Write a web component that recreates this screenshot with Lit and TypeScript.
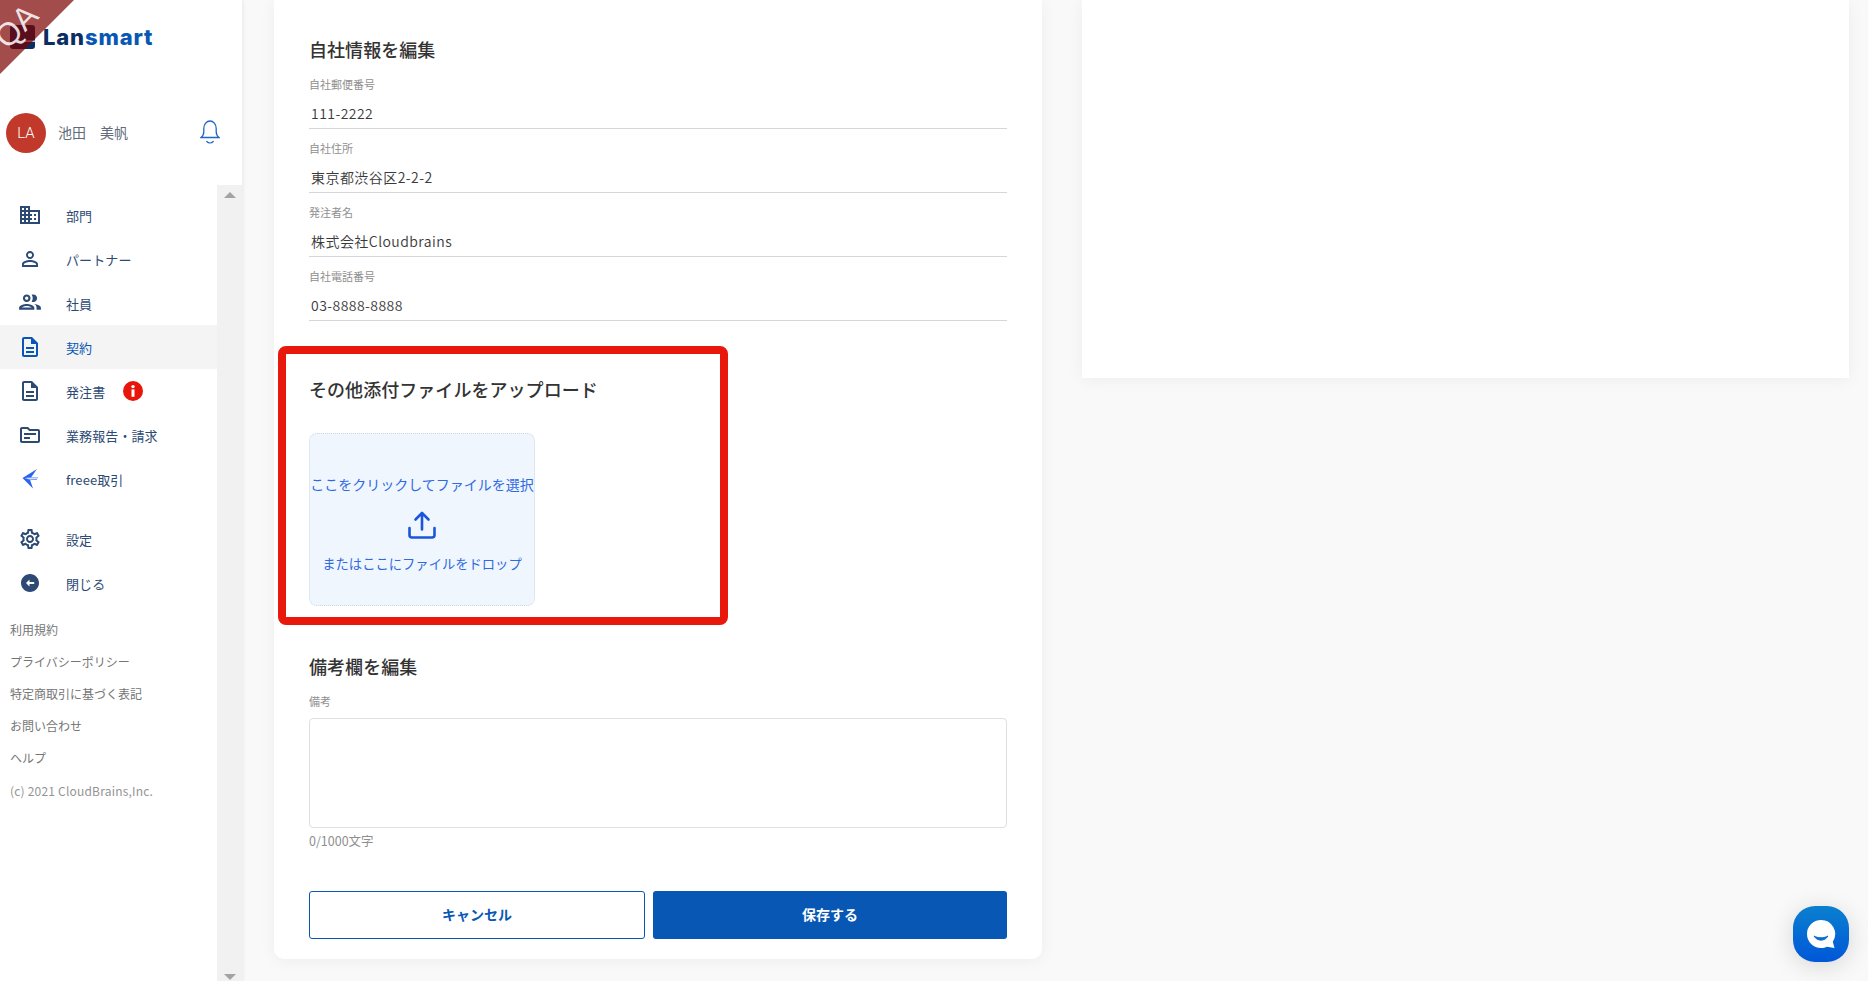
import { LitElement, html, css } from "lit";
import { customElement } from "lit/decorators.js";

const P = {
  domain: "M12 7V3H2v18h20V7H12zM6 19H4v-2h2v2zm0-4H4v-2h2v2zm0-4H4V9h2v2zm0-4H4V5h2v2zm4 12H8v-2h2v2zm0-4H8v-2h2v2zm0-4H8V9h2v2zm0-4H8V5h2v2zm10 12h-8v-2h2v-2h-2v-2h2v-2h-2V9h8v10zm-2-8h-2v2h2v-2zm0 4h-2v2h2v-2z",
  person: "M12 5.9c1.16 0 2.1.94 2.1 2.1s-.94 2.1-2.1 2.1S9.9 9.16 9.9 8s.94-2.1 2.1-2.1m0 9c2.97 0 6.1 1.46 6.1 2.1v1.1H5.9V17c0-.64 3.13-2.1 6.1-2.1M12 4C9.79 4 8 5.79 8 8s1.79 4 4 4 4-1.79 4-4-1.79-4-4-4zm0 9c-2.67 0-8 1.34-8 4v3h16v-3c0-2.66-5.33-4-8-4z",
  people: "M9 13.75c-2.34 0-7 1.17-7 3.5V19h14v-1.75c0-2.33-4.66-3.5-7-3.5zM4.34 17c.84-.58 2.87-1.25 4.66-1.25s3.82.67 4.66 1.25H4.34zM9 12c1.93 0 3.5-1.57 3.5-3.5S10.93 5 9 5 5.5 6.57 5.5 8.5 7.07 12 9 12zm0-5c.83 0 1.5.67 1.5 1.5S9.83 10 9 10s-1.5-.67-1.5-1.500S8.170 7 9 7zm7.040 6.810c1.160.84 1.960 1.960 1.960 3.440V19h4v-1.750c0-2.020-3.500-3.170-5.960-3.440zM15 12c1.930 0 3.500-1.570 3.500-3.500S16.930 5 15 5c-.54 0-1.040.13-1.500.35.630.89 1 1.980 1 3.150s-.37 2.260-1 3.150c.46.22.96.35 1.500.35z",
  doc: "M8 16h8v2H8zm0-4h8v2H8zm6-10H6c-1.1 0-2 .9-2 2v16c0 1.1.89 2 1.99 2H18c1.1 0 2-.9 2-2V8l-6-6zm4 18H6V4h7v5h5v11z",
  topic: "M20 6h-8l-2-2H4c-1.1 0-1.99.9-1.99 2L2 18c0 1.1.9 2 2 2h16c1.1 0 2-.9 2-2V8c0-1.1-.9-2-2-2zm0 12H4V6h5.17l2 2H20v10zm-8-2H6v-2h6v2zm6-4H6v-2h12v2z",
  gear: "M19.43 12.98c.04-.32.07-.64.07-.98 0-.34-.03-.66-.07-.98l2.11-1.65c.19-.15.24-.42.12-.64l-2-3.46c-.09-.16-.26-.25-.44-.25-.06 0-.12.01-.17.03l-2.49 1c-.52-.4-1.08-.73-1.69-.98l-.38-2.65C14.46 2.18 14.25 2 14 2h-4c-.25 0-.46.18-.49.42l-.38 2.65c-.61.25-1.17.59-1.69.98l-2.49-1c-.06-.02-.12-.03-.18-.03-.17 0-.34.09-.43.25l-2 3.46c-.13.22-.07.49.12.64l2.11 1.65c-.04.32-.07.65-.07.98 0 .33.03.66.07.98l-2.11 1.65c-.19.15-.24.42-.12.64l2 3.46c.09.16.26.25.44.25.06 0 .12-.01.17-.03l2.49-1c.52.4 1.08.73 1.69.98l.38 2.65c.03.24.24.42.49.42h4c.25 0 .46-.18.49-.42l.38-2.65c.61-.25 1.17-.59 1.69-.98l2.49 1c.06.02.12.03.18.03.17 0 .34-.09.43-.25l2-3.46c.12-.22.07-.49-.12-.64l-2.11-1.65zm-1.98-1.71c.04.31.05.52.05.73 0 .21-.02.43-.05.73l-.14 1.13.89.7 1.08.84-.7 1.21-1.27-.51-1.04-.42-.9.68c-.43.32-.84.56-1.25.73l-1.06.43-.16 1.13-.2 1.35h-1.4l-.19-1.35-.16-1.13-1.06-.43c-.43-.18-.83-.41-1.23-.71l-.91-.7-1.06.43-1.27.51-.7-1.21 1.08-.84.89-.7-.14-1.13c-.03-.31-.05-.54-.05-.74s.02-.43.05-.73l.14-1.13-.89-.7-1.08-.84.7-1.21 1.27.51 1.04.42.9-.68c.43-.32.84-.56 1.25-.73l1.06-.43.16-1.13.2-1.35h1.39l.19 1.35.16 1.13 1.06.43c.43.18.83.41 1.23.71l.91.7 1.06-.43 1.27-.51.7 1.21-1.07.85-.89.7.14 1.13zM12 8c-2.21 0-4 1.79-4 4s1.79 4 4 4 4-1.79 4-4-1.79-4-4-4zm0 6c-1.1 0-2-.9-2-2s.9-2 2-2 2 .9 2 2-.9 2-2 2z",
  back: "M3 12c0 4.97 4.03 9 9 9s9-4.030 9-9-4.030-9-9-9-9 4.030-9 9zm8.500-.9h4.700v1.800h-4.700v2.600L8 12l3.500-3.500v2.600z",
};

const icon = (d: string, vb = "0 0 24 24") => html`<svg class="ic" viewBox=${vb} width="24" height="24"><path d=${d} fill="currentColor"/></svg>`;

const freee = html`<svg class="ic" viewBox="0 0 24 24" width="24" height="24">
  <path d="M4.500 11 L19 2 L13 10.500 L7 11 L12 12.800 L15 21.500 Z" fill="#2a63ee"/>
  <path d="M7 10.500 H20 V11.300 H7 Z M11 12.500 L19 12.100 V12.800 L11 13.200 Z" fill="#4d80f2"/>
</svg>`;

const nav = [
  { t: "部門", i: icon(P.domain) },
  { t: "パートナー", i: icon(P.person) },
  { t: "社員", i: icon(P.people, "1 1.900 22 22") },
  { t: "契約", i: icon(P.doc), active: true },
  { t: "発注書", i: icon(P.doc), badge: true },
  { t: "業務報告・請求", i: icon(P.topic) },
  { t: "freee取引", i: freee },
];
const nav2 = [
  { t: "設定", i: icon(P.gear) },
  { t: "閉じる", i: icon(P.back) },
];
const links = ["利用規約", "プライバシーポリシー", "特定商取引に基づく表記", "お問い合わせ", "ヘルプ"];
const fields = [
  ["自社郵便番号", "111-2222"],
  ["自社住所", "東京都渋谷区2-2-2"],
  ["発注者名", "株式会社Cloudbrains"],
  ["自社電話番号", "03-8888-8888"],
];

@customElement("app-root")
export class AppRoot extends LitElement {
  static styles = css`
    :host {
      display: block;
      position: relative;
      width: 1868px;
      height: 981px;
      overflow: hidden;
      background: #f9f9f9;
      font-family: "Noto Sans CJK JP", "Noto Sans", sans-serif;
      color: #333;
    }
    .page { display: flex; height: 981px; }
    .side {
      width: 242px;
      flex: none;
      background: #fff;
      display: flex;
      flex-direction: column;
      box-shadow: 1px 0 4px rgba(0,0,0,.07);
    }
    .side-top { height: 185px; flex: none; display: flex; flex-direction: column; }
    .logo { display: flex; align-items: center; gap: 8px; height: 50px; margin-top: 12px; padding-left: 10px; }
    .logo-word { font-family: Inter, sans-serif; font-weight: 800; font-size: 22px; letter-spacing: .85px; color: #0a2d63; line-height: 1; }
    .logo-word span { color: #0957b5; }
    .user { display: flex; align-items: center; margin-top: 51px; padding-left: 6px; }
    .avatar { width: 40px; height: 40px; border-radius: 50%; background: #c0392b; color: #fff; font-size: 15px; font-weight: 300; display: flex; align-items: center; justify-content: center; font-family: Roboto, sans-serif; }
    .uname { margin-left: 12px; font-size: 14px; font-weight: 400; color: #5f6b7a; white-space: pre; position: relative; top: -1px; }
    .bell { margin-left: 72px; position: relative; top: -1px; }
    .side-body { flex: 1; display: flex; min-height: 0; }
    .list { width: 217px; flex: none; padding-top: 8px; }
    .bar { flex: 1; background: #f1f1f1; display: flex; flex-direction: column; justify-content: space-between; align-items: center; padding: 7px 0 0; }
    .tri-up { width: 0; height: 0; border: 6px solid transparent; border-top: 0; border-bottom: 6px solid #a3a3a3; }
    .tri-down { width: 0; height: 0; border: 6px solid transparent; border-bottom: 0; border-top: 6px solid #a3a3a3; margin-bottom: 1px; }
    .row { display: flex; align-items: center; height: 44px; color: #2c4a73; font-size: 13px; }
    .row .ic { margin-left: 18px; flex: none; }
    .row .lb { margin-left: 24px; letter-spacing: .1px; }
    .row.active { background: #f4f4f4; color: #0957b5; }
    .badge { margin-left: 18px; width: 20px; height: 20px; }
    .sec2 { margin-top: 16px; }
    .links { margin-top: 8px; padding-left: 10px; }
    .link { height: 32px; display: flex; align-items: center; font-size: 12px; color: #757575; }
    .copy { margin-top: 0; height: 34px; display: flex; align-items: center; font-size: 12px; color: #949494; font-weight: 400; letter-spacing: .2px; }
    .main { display: flex; align-items: flex-start; gap: 40px; padding-left: 32px; }
    .card { background: #fff; box-shadow: 0 2px 16px rgba(0,0,0,.05); }
    .form { width: 768px; padding: 35px 35px 20px 35px; box-sizing: border-box; height: 959px; border-radius: 0 0 10px 10px; }
    .blank { width: 767px; height: 378px; }
    h2 { margin: 0; font-size: 18px; font-weight: 500; line-height: 28px; color: #333; letter-spacing: .05px; }
    .fields { margin-top: 2px; }
    .f { box-sizing: border-box; height: 64px; padding-top: 9px; border-bottom: 1px solid #d3d6da; }
    .lab { font-size: 11px; line-height: 20px; color: #8f8f8f; font-weight: 400; }
    .val { margin-top: 7px; font-size: 14px; line-height: 24px; padding-left: 2px; letter-spacing: .45px; color: #3a3a3a; font-weight: 350; }
    .h-up { margin-top: 54px; }
    .drop {
      margin-top: 30px; width: 226px; height: 173px; box-sizing: border-box;
      border: 1px dotted #cdd6e2; border-radius: 8px; background: #f0f6fe;
      display: flex; flex-direction: column; align-items: center; justify-content: center;
      padding-top: 8px; color: #2f6ae0; white-space: nowrap; font-size: 14px; line-height: 20px; font-weight: 400;
    }
    .drop svg { margin: 17px 0 15px; display: block; }
    .drop .t2 { font-size: 13.3px; }
    .h-note { margin-top: 46px; }
    .l2 { margin-top: 11px; }
    .ta { margin-top: 7px; height: 110px; box-sizing: border-box; border: 1px solid #dfdfdf; border-radius: 4px; }
    .cnt { margin-top: 4px; font-size: 12.5px; line-height: 18px; color: #8f8f8f; font-weight: 400; }
    .btns { margin-top: 41px; display: flex; gap: 8px; }
    .btn { height: 48px; box-sizing: border-box; border-radius: 3px; display: flex; align-items: center; justify-content: center; font-size: 14px; font-weight: 700; padding-bottom: 2px; }
    .cancel { width: 336px; border: 1px solid #0957b5; color: #0957b5; background: #fff; }
    .save { flex: 1; background: #0957b5; color: #fff; }
    .ribbon {
      position: absolute; left: 0; top: 0; width: 74px; height: 74px;
      background: rgba(122,0,0,.7);
      clip-path: polygon(0 0, 100% 0, 0 100%);
    }
    .ribbon span {
      position: absolute; left: -9px; top: 9px; width: 50px; text-align: center;
      font-family: "Liberation Sans", sans-serif; font-size: 32px; line-height: 34px; color: rgba(255,255,255,.85);
      transform: rotate(-45deg); font-weight: 400;
    }
    .mark {
      position: absolute; left: 278px; top: 346px; width: 450px; height: 279px;
      box-sizing: border-box; border: 8px solid #e8190c; border-radius: 8px; pointer-events: none;
    }
    .chat {
      position: absolute; left: 1793px; top: 906px; width: 56px; height: 56px; border-radius: 22px;
      background: linear-gradient(180deg, #0a80cf, #0057d8);
      box-shadow: 0 4px 24px rgba(0,0,0,.14);
      display: flex; align-items: center; justify-content: center;
    }
  `;

  render() {
    const row = (n: any) => html`
      <div class="row ${n.active ? "active" : ""}">
        ${n.i}<span class="lb">${n.t}</span>
        ${n.badge ? html`<svg class="badge" viewBox="0 0 20 20"><circle cx="10" cy="10" r="10" fill="#e8150a"/><circle cx="10" cy="5.600" r="1.700" fill="#fff"/><rect x="8.500" y="8.400" width="3" height="7.400" fill="#fff"/></svg>` : ""}
      </div>`;
    return html`
      <div class="page">
        <aside class="side">
          <div class="side-top">
            <div class="logo">
              <svg width="25" height="24" viewBox="0 0 25 24"><path d="M3 0h19a3 3 0 0 1 3 3v12.500H14v1.200h11V21a3 3 0 0 1-3 3H3a3 3 0 0 1-3-3V3a3 3 0 0 1 3-3z" fill="#0a2d63"/></svg>
              <span class="logo-word">Lan<span>smart</span></span>
            </div>
            <div class="user">
              <div class="avatar">LA</div>
              <div class="uname">池田　美帆</div>
              <svg class="bell" width="20" height="25" viewBox="0 0 20 25" fill="none" stroke="#1f66c6" stroke-width="1.300" stroke-linecap="round">
                <path d="M1 17.500c2-1.400 2.800-3 2.800-6V8.500C3.800 4.300 6.600 1 10 1s6.200 3.300 6.200 7.500v3c0 3 .8 4.600 2.800 6z"/>
                <path d="M6.800 21.500c1.800 1.800 4.600 1.800 6.400 0"/>
              </svg>
            </div>
          </div>
          <div class="side-body">
            <div class="list">
              ${nav.map(row)}
              <div class="sec2">${nav2.map(row)}</div>
              <div class="links">
                ${links.map((l) => html`<div class="link">${l}</div>`)}
                <div class="copy">(c) 2021 CloudBrains,Inc.</div>
              </div>
            </div>
            <div class="bar"><div class="tri-up"></div><div class="tri-down"></div></div>
          </div>
        </aside>
        <main class="main">
          <section class="card form">
            <h2>自社情報を編集</h2>
            <div class="fields">
              ${fields.map(([l, v]) => html`<div class="f"><div class="lab">${l}</div><div class="val">${v}</div></div>`)}
            </div>
            <h2 class="h-up">その他添付ファイルをアップロード</h2>
            <div class="drop">
              <div>ここをクリックしてファイルを選択</div>
              <svg width="28" height="28" viewBox="0 0 28 28" fill="none" stroke="#1a56db" stroke-width="2.600" stroke-linecap="round" stroke-linejoin="round">
                <path d="M14 18.500V2.500M7.500 8.500L14 2l6.500 6.500"/>
                <path d="M1.500 17v7a2.500 2.500 0 0 0 2.500 2.500h20a2.500 2.500 0 0 0 2.500-2.500v-7"/>
              </svg>
              <div class="t2">またはここにファイルをドロップ</div>
            </div>
            <h2 class="h-note">備考欄を編集</h2>
            <div class="lab l2">備考</div>
            <div class="ta"></div>
            <div class="cnt">0/1000文字</div>
            <div class="btns">
              <div class="btn cancel">キャンセル</div>
              <div class="btn save">保存する</div>
            </div>
          </section>
          <section class="card blank"></section>
        </main>
      </div>
      <div class="ribbon"><span>QA</span></div>
      <div class="mark"></div>
      <div class="chat">
        <svg width="30" height="30" viewBox="0 0 30 30">
          <path d="M15 1a14 14 0 1 0 0 28c2.200 0 4.500-.5 6-1.300l7.500 1.300-1.700-6.300A14 14 0 0 0 15 1z" fill="#fff"/>
          <path d="M8 17c3 5.500 11 5.500 14 0-4 2.400-10 2.400-14 0z" fill="#0a6bd0" stroke="#0a6bd0" stroke-width="1"/>
        </svg>
      </div>
    `;
  }
}
